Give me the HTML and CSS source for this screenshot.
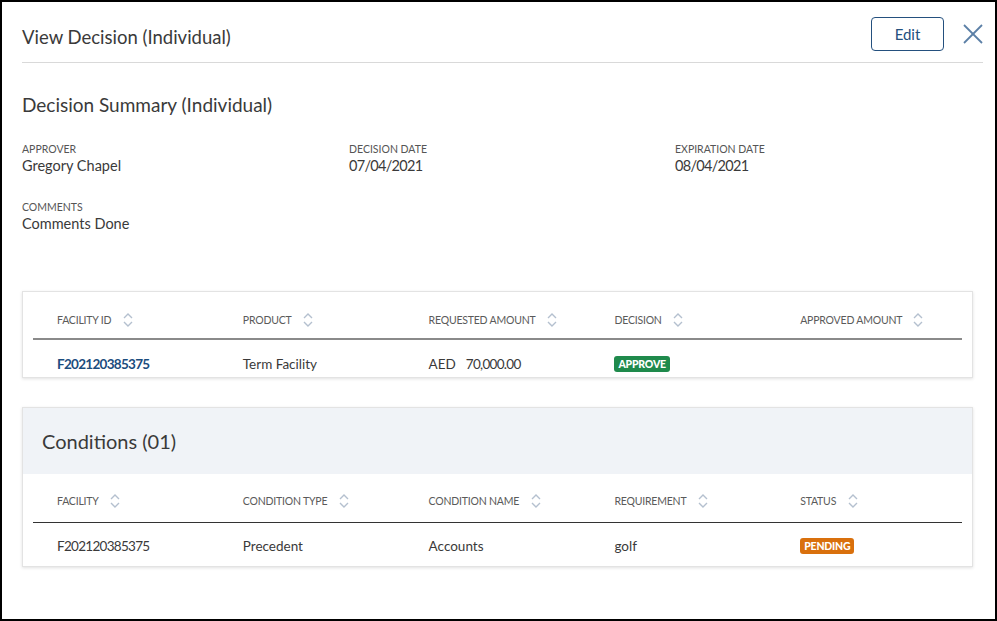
FILE: index.html
```html
<!DOCTYPE html>
<html>

<head>
    <link rel="stylesheet" href="styles.css">
</head>

<body>
    <div class="frame">

        <!-- header -->
        <div class="top">
            <div class="top-title">View Decision (Individual)</div>
            <button class="edit">Edit</button>
            <svg class="close" width="20" height="20" viewBox="0 0 20 20">
                <line x1="1" y1="1" x2="19" y2="19" />
                <line x1="19" y1="1" x2="1" y2="19" />
            </svg>
        </div>

        <!-- summary -->
        <div class="summary">
            <h2>Decision Summary (Individual)</h2>
            <div class="fields">
                <div class="field">
                    <div class="label">Approver</div>
                    <div class="value">Gregory Chapel</div>
                </div>
                <div class="field">
                    <div class="label">Decision Date</div>
                    <div class="value num">07/04/2021</div>
                </div>
                <div class="field">
                    <div class="label">Expiration Date</div>
                    <div class="value num">08/04/2021</div>
                </div>
                <div class="field">
                    <div class="label">Comments</div>
                    <div class="value">Comments Done</div>
                </div>
            </div>
        </div>

        <!-- facilities -->
        <div class="card facilities">
            <table>
                <thead>
                    <tr>
                        <th>Facility ID <svg class="sort" viewBox="0 0 10 14"><polyline points="1,5 5,1 9,5" /><polyline points="1,9 5,13 9,9" /></svg></th>
                        <th>Product <svg class="sort" viewBox="0 0 10 14"><polyline points="1,5 5,1 9,5" /><polyline points="1,9 5,13 9,9" /></svg></th>
                        <th>Requested Amount <svg class="sort" viewBox="0 0 10 14"><polyline points="1,5 5,1 9,5" /><polyline points="1,9 5,13 9,9" /></svg></th>
                        <th>Decision <svg class="sort" viewBox="0 0 10 14"><polyline points="1,5 5,1 9,5" /><polyline points="1,9 5,13 9,9" /></svg></th>
                        <th>Approved Amount <svg class="sort" viewBox="0 0 10 14"><polyline points="1,5 5,1 9,5" /><polyline points="1,9 5,13 9,9" /></svg></th>
                    </tr>
                </thead>
                <tbody>
                    <tr>
                        <td><a class="link num">F202120385375</a></td>
                        <td>Term Facility</td>
                        <td><span class="cur">AED</span><span class="num">70,000.00</span></td>
                        <td><span class="badge green">APPROVE</span></td>
                        <td></td>
                    </tr>
                </tbody>
            </table>
        </div>

        <!-- conditions -->
        <div class="card conditions">
            <div class="band">Conditions (01)</div>
            <table>
                <thead>
                    <tr>
                        <th>Facility <svg class="sort" viewBox="0 0 10 14"><polyline points="1,5 5,1 9,5" /><polyline points="1,9 5,13 9,9" /></svg></th>
                        <th>Condition Type <svg class="sort" viewBox="0 0 10 14"><polyline points="1,5 5,1 9,5" /><polyline points="1,9 5,13 9,9" /></svg></th>
                        <th>Condition Name <svg class="sort" viewBox="0 0 10 14"><polyline points="1,5 5,1 9,5" /><polyline points="1,9 5,13 9,9" /></svg></th>
                        <th>Requirement <svg class="sort" viewBox="0 0 10 14"><polyline points="1,5 5,1 9,5" /><polyline points="1,9 5,13 9,9" /></svg></th>
                        <th>Status <svg class="sort" viewBox="0 0 10 14"><polyline points="1,5 5,1 9,5" /><polyline points="1,9 5,13 9,9" /></svg></th>
                    </tr>
                </thead>
                <tbody>
                    <tr>
                        <td class="num">F202120385375</td>
                        <td>Precedent</td>
                        <td>Accounts</td>
                        <td>golf</td>
                        <td><span class="badge orange">PENDING</span></td>
                    </tr>
                </tbody>
            </table>
        </div>

    </div>
</body>

</html>
```

FILE: styles.css
```css
body {
    margin: 0;
    font-family: Lato, "Open Sans", sans-serif;
    color: #3a3a3a;
}

.frame {
    box-sizing: border-box;
    width: 997px;
    height: 621px;
    border: 2px solid #000;
}

/* header */
.top {
    display: flex;
    align-items: center;
    margin: 0 12px 0 20px;
    padding: 15px 0 11px;
    border-bottom: 1px solid #d9d9d9;
}

.top-title {
    flex: 1;
    font-size: 18.5px;
    line-height: 24px;
    padding-top: 5px;
}

.edit {
    width: 73px;
    height: 34px;
    background: #fff;
    border: 1.5px solid #24507e;
    border-radius: 4px;
    color: #24507e;
    font-family: inherit;
    font-size: 15px;
    padding: 0;
}

.close {
    margin-left: 19px;
    stroke: #5b7fa6;
    stroke-width: 1.8;
}

/* summary */
.summary {
    padding: 0 20px;
}

.summary h2 {
    margin: 30px 0 0;
    font-size: 19px;
    line-height: 24px;
    font-weight: normal;
}

.fields {
    display: grid;
    grid-template-columns: 327px 326px 1fr;
    row-gap: 24px;
    padding-top: 25px;
}

.label {
    font-size: 10.5px;
    line-height: 14px;
    text-transform: uppercase;
    color: #555;
}

.value {
    font-size: 14.5px;
    line-height: 20px;
}

.num {
    letter-spacing: -0.7px;
}

/* cards */
.card {
    margin: 0 22px 0 20px;
    border: 1px solid #e3e3e3;
    box-shadow: 0 1px 3px rgba(0, 0, 0, 0.12);
    background: #fff;
}

.facilities {
    margin-top: 57px;
    padding: 0 10px;
}

.conditions {
    margin-top: 29px;
}

.conditions table {
    margin: 0 10px;
    width: calc(100% - 20px);
}

.band {
    background: #f0f3f7;
    height: 66px;
    line-height: 66px;
    padding-left: 19px;
    font-size: 20px;
}

table {
    width: 100%;
    border-collapse: collapse;
    table-layout: fixed;
}

th {
    text-align: left;
    font-weight: normal;
    font-size: 10.5px;
    letter-spacing: -0.2px;
    text-transform: uppercase;
    color: #5a5a5a;
    padding: 0 0 0 24px;
    vertical-align: top;
    white-space: nowrap;
}

.facilities th {
    height: 47px;
    line-height: 14px;
    padding-top: 21px;
    box-sizing: border-box;
    border-bottom: 2px solid #8a8a8a;
}

.conditions th {
    height: 48px;
    line-height: 14px;
    padding-top: 20px;
    box-sizing: border-box;
    border-bottom: 1px solid #333;
}

.sort {
    width: 10px;
    height: 14px;
    margin-left: 9px;
    vertical-align: -3px;
    fill: none;
    stroke: #b4c0cf;
    stroke-width: 1.4;
}

td {
    padding: 14px 0 0 24px;
    font-size: 13.5px;
    line-height: 20px;
    vertical-align: top;
}

.facilities td {
    height: 38px;
    box-sizing: border-box;
}

.conditions td {
    height: 44px;
    padding-top: 13px;
    box-sizing: border-box;
}

.link {
    color: #1b4d7e;
    font-weight: bold;
}

.cur {
    margin-right: 10px;
}

.badge {
    display: inline-block;
    color: #fff;
    font-weight: 900;
    font-size: 10.5px;
    letter-spacing: -0.2px;
    line-height: 16px;
    padding: 0 4px;
    border-radius: 3px;
    vertical-align: top;
    margin-top: 2px;
}

.green {
    background: #1f8a4c;
}

.orange {
    background: #d9700d;
}
```
